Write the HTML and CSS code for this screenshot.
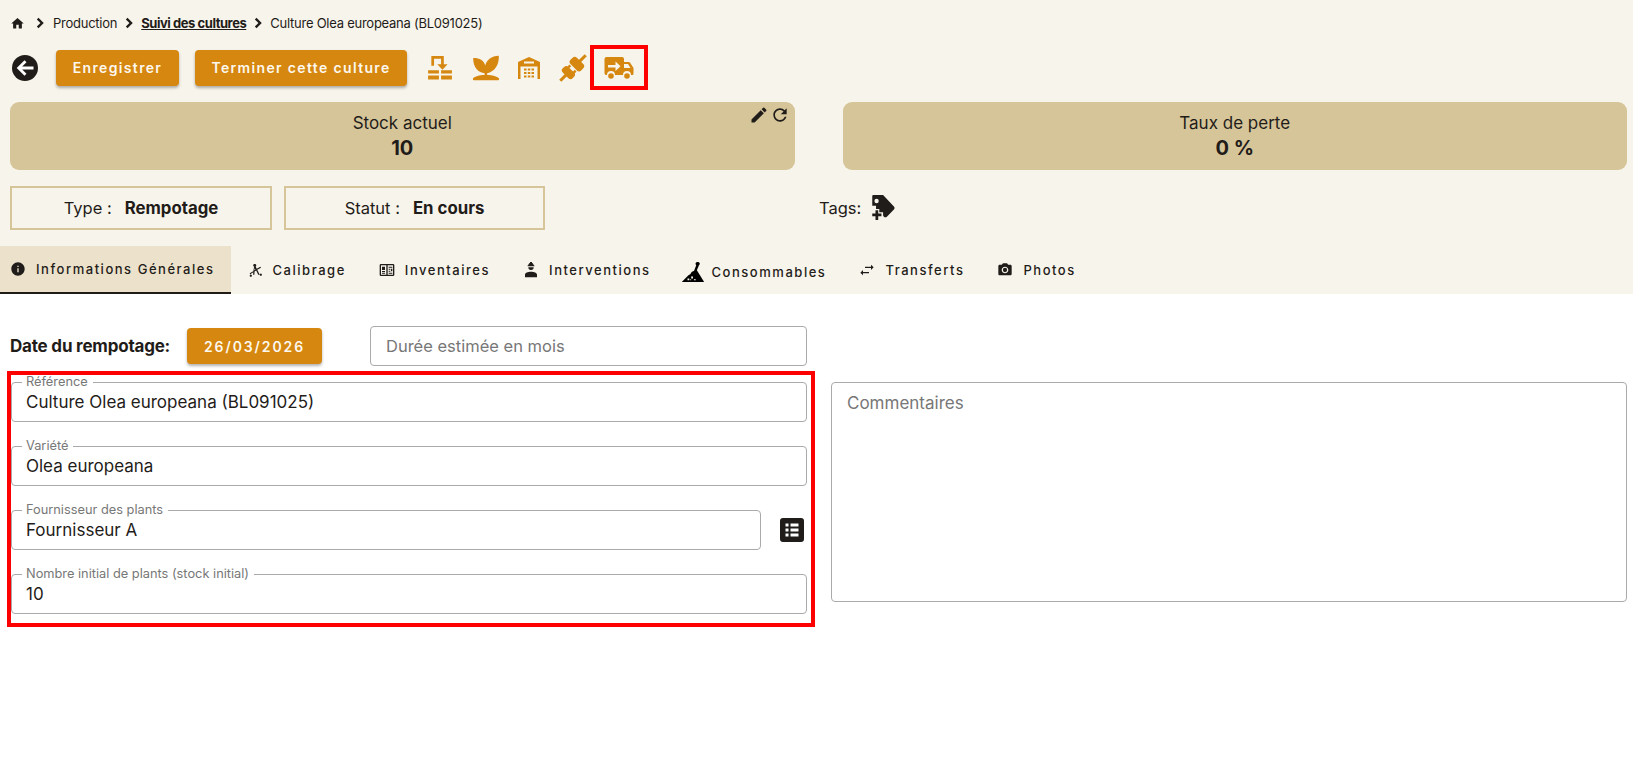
FILE: index.html
```html
<!DOCTYPE html>
<html lang="fr">
<head>
<meta charset="utf-8">
<title>Culture Olea europeana</title>
<link rel="stylesheet" href="styles.css">
</head>
<body>
<header class="top">
  <nav class="crumbs">
    <svg class="home" viewBox="0 0 24 24"><path d="M10 20v-6h4v6h5v-8h3L12 3 2 12h3v8z"/></svg>
    <svg class="chev first" viewBox="0 0 24 24"><path d="M10 5 7.800 7.200 12.600 12l-4.800 4.800L10 19l7-7z"/></svg>
    <span class="crumb">Production</span>
    <svg class="chev second" viewBox="0 0 24 24"><path d="M10 5 7.800 7.200 12.600 12l-4.800 4.800L10 19l7-7z"/></svg>
    <span class="crumb link">Suivi des cultures</span>
    <svg class="chev" viewBox="0 0 24 24"><path d="M10 5 7.800 7.200 12.600 12l-4.800 4.800L10 19l7-7z"/></svg>
    <span class="crumb">Culture Olea europeana (BL091025)</span>
  </nav>
  <div class="actions">
    <svg class="back" viewBox="0 0 26 26"><circle cx="13" cy="13" r="13" fill="#1f1c19"/><path fill="#fff" d="M21.500 11.500H10.200l4.300-4.300L12.500 5.200 4.700 13l7.800 7.800 2-2-4.300-4.300h11.300z"/></svg>
    <button class="btn save">Enregistrer</button>
    <button class="btn end">Terminer cette culture</button>
    <svg class="tool t1" viewBox="0 0 24 24"><path d="M4 1h11.500v7.500H19l-4.700 5-4.800-5H13V3.500H6.500V10H4zM1 14h10v3H1zm12 0h10v3H13zM1 19h10v3.500H1zm12 0h10v3.500H13z"/></svg>
    <svg class="tool t2" viewBox="0 0 24 24"><path d="M10.800 16.500C6 16 1 12.500 1 3.500c5-.2 9 1.800 10.300 6.300C12.800 5 16.500 1.800 23 1.500c.3 8-3.500 13.500-10 15V18c4.500 0 8.500 1.200 10 2.800 .5 .6 .2 1.700-.6 1.700H1.600c-.8 0-1.100-1.100-.6-1.700C2.500 19.200 6.300 18 10.800 18z"/></svg>
    <svg class="tool t3" viewBox="0 0 24 24"><path fill-rule="evenodd" d="M12 1 23 6v17h-2.500V10.500h-17V23H1V6zM7 5.500V7.500h10V5.500zM7 12.500h2.500v2H7zm3.800 0h2.500v2h-2.500zm3.700 0h2.500v2h-2.500zM7 16h2.500v2H7zm3.800 0h2.500v2h-2.500zm3.700 0h2.500v2h-2.500zM7 19.500h2.500v2H7zm3.800 0h2.500v2h-2.500zm3.700 0h2.500v2h-2.500z"/></svg>
    <svg class="tool t4" viewBox="0 0 30 30"><g transform="rotate(-45 15 15)"><rect x="-3" y="13.500" width="8" height="3"/><rect x="4.500" y="8" width="8" height="14" rx="3"/><rect x="12" y="10" width="3" height="2.500"/><rect x="12" y="17.500" width="3" height="2.500"/><rect x="16" y="7.500" width="9" height="15" rx="3"/><rect x="24" y="13.500" width="9" height="3"/></g></svg>
    <span class="flag">
      <svg class="truck" viewBox="0 0 30 24"><path fill-rule="evenodd" d="M2.500 1H18a2 2 0 0 1 2 2v3h4.500c.8 0 1.400.4 1.800 1l3.200 5v5.500c0 1-.7 1.500-1.500 1.500H27a4 4 0 0 0-8 0h-8a4 4 0 0 0-8 0H2.500C1 19 .5 18 .5 17V3a2 2 0 0 1 2-2zM20 8v4h6.500L24 8zM4 9v2.500h7.500V15l5-4.800-5-4.700V9z"/><circle cx="7" cy="20" r="2.800"/><circle cx="23" cy="20" r="2.800"/></svg>
    </span>
  </div>
  <section class="kpis">
    <div class="kpi">
      <span class="kpi-tools">
        <svg viewBox="0 0 24 24"><path d="M3 17.250V21h3.750L17.810 9.940l-3.750-3.750L3 17.250zM20.710 7.040c.39-.39.39-1.020 0-1.410l-2.340-2.340a.9959.9959 0 0 0-1.410 0l-1.830 1.830 3.750 3.750 1.830-1.830z"/></svg>
        <svg viewBox="0 0 24 24"><path d="M17.650 6.350C16.200 4.900 14.210 4 12 4c-4.420 0-7.990 3.580-7.990 8s3.570 8 7.990 8c3.730 0 6.840-2.550 7.730-6h-2.080c-.82 2.330-3.040 4-5.650 4-3.310 0-6-2.690-6-6s2.690-6 6-6c1.660 0 3.140.69 4.220 1.780L13 11h7V4l-2.350 2.350z"/></svg>
      </span>
      <div class="kpi-label">Stock actuel</div>
      <div class="kpi-value">10</div>
    </div>
    <div class="kpi">
      <div class="kpi-label">Taux de perte</div>
      <div class="kpi-value">0 %</div>
    </div>
  </section>
  <section class="meta">
    <div class="box">Type :<b>Rempotage</b></div>
    <div class="box">Statut :<b>En cours</b></div>
    <div class="tags">Tags:
      <svg viewBox="0 0 24 24"><path d="M4 0h9l10 10.500c.8.8.8 2 0 2.800L16.500 20c-.8.8-2 .8-2.800 0L13 19v-3H9.500v-3H6.500V10H3V1a1 1 0 0 1 1-1zm3 3.500a2 2 0 1 0 0 4 2 2 0 0 0 0-4zM6 14h2.500v3H11.500v2.500H8.500v3.500H6v-3.500H3V17h3z"/></svg>
    </div>
  </section>
  <nav class="tabs">
    <div class="tab active">
      <svg viewBox="0 0 24 24"><path d="M12 2C6.480 2 2 6.480 2 12s4.480 10 10 10 10-4.480 10-10S17.520 2 12 2zm1 15h-2v-6h2v6zm0-8h-2V7h2v2z"/></svg>Informations Générales</div>
    <div class="tab">
      <svg viewBox="0 0 24 24"><path d="M12 3a2 2 0 0 1 1 3.700l1.600 3.300 5.400-3 1 1.500-5.600 3.200 3.600 7.300h-2.200l-3-6.200-2.500 1.500-.2 4.700H9.200l.2-3.500L5 18.500 4 17l5.500-3.200 1.200-7A2 2 0 0 1 12 3zm-.5 6.500-.5 3 1.600-.9zM4 20.500a1.700 1.700 0 1 1 0 .01zM19 19a1.700 1.700 0 1 1 0 .01z"/></svg>Calibrage</div>
    <div class="tab">
      <svg viewBox="0 0 24 24"><path fill-rule="evenodd" d="M3 3h18a2 2 0 0 1 2 2v14a2 2 0 0 1-2 2H3a2 2 0 0 1-2-2V5a2 2 0 0 1 2-2zm0 2v14h8V5zm10 0v14h8V5zM4.500 7H9v5H4.500zm0 6.500H9V15H4.500zm0 2.500H9v1.500H4.500zM14.500 7H20v1.500h-5.500zm0 3H17v1.500h-2.500zm3.500 0h2v4h-2zm-3.500 3h2.500v1.500h-2.500zm0 3H20v1.500h-5.500z"/></svg>Inventaires</div>
    <div class="tab">
      <svg viewBox="0 0 24 24"><path d="M10.500 0h3v1.500c1.700.6 2.500 1.800 2.500 3.500h1v1.500H7V5h1c0-1.700.8-2.900 2.500-3.500zM8 8h8a4 4 0 0 1-8 0zM12 14.500c5 0 9 1.800 9 4.500v4H3v-4c0-2.700 4-4.500 9-4.500z"/></svg>Interventions</div>
    <div class="tab cons">
      <svg viewBox="0 0 24 24"><path fill-rule="evenodd" d="M17 1a2 2 0 0 1 1.500 3.600L16.200 10l8 13H-.5L7 15.500l2-1 1.500-2.500 2.700-1.500L15.500 4.500A2 2 0 0 1 17 1zM6 19v2h2v-2zm4-2v2h2v-2zm-1 3v1h1v-1zm4 0v1h2v-1z"/></svg>Consommables</div>
    <div class="tab">
      <svg viewBox="0 0 24 24"><path d="M22 8l-4-4v3H9v2h9v3l4-4zM2 16l4 4v-3h9v-2H6v-3l-4 4z"/></svg>Transferts</div>
    <div class="tab">
      <svg viewBox="0 0 24 24"><circle cx="12" cy="12" r="3.200"/><path d="M9 2 7.170 4H4c-1.100 0-2 .9-2 2v12c0 1.100.9 2 2 2h16c1.100 0 2-.9 2-2V6c0-1.100-.9-2-2-2h-3.170L15 2H9zm3 15c-2.760 0-5-2.240-5-5s2.240-5 5-5 5 2.240 5 5-2.240 5-5 5z"/></svg>Photos</div>
  </nav>
</header>
<main class="content">
  <div class="date-row">
    <span class="date-label">Date du rempotage:</span>
    <button class="btn date">26/03/2026</button>
    <div class="plain">Durée estimée en mois</div>
  </div>
  <div class="columns">
    <div class="fields">
      <fieldset class="field"><legend>Référence</legend>Culture Olea europeana (BL091025)</fieldset>
      <fieldset class="field"><legend>Variété</legend>Olea europeana</fieldset>
      <div class="with-icon">
        <fieldset class="field"><legend>Fournisseur des plants</legend>Fournisseur A</fieldset>
        <svg class="list" viewBox="0 0 24 24"><path fill-rule="evenodd" d="M3 0h18a3 3 0 0 1 3 3v18a3 3 0 0 1-3 3H3a3 3 0 0 1-3-3V3a3 3 0 0 1 3-3zm2.500 5.500v3h3v-3zm5 0v3h8v-3zm-5 5v3h3v-3zm5 0v3h8v-3zm-5 5v3h3v-3zm5 0v3h8v-3z"/></svg>
      </div>
      <fieldset class="field"><legend>Nombre initial de plants (stock initial)</legend>10</fieldset>
    </div>
    <div class="comments">Commentaires</div>
  </div>
</main>
</body>
</html>
```
FILE: styles.css
```css
* { box-sizing: border-box; }
html, body { margin: 0; padding: 0; }
body {
  width: 1633px;
  height: 768px;
  overflow: hidden;
  background: #fff;
  color: #1f1c19;
  font-family: "Inter", "Liberation Sans", sans-serif;
}
.top { background: #f7f4eb; height: 294px; }

.crumbs { display: flex; align-items: center; height: 20px; padding: 13px 0 0 10px; box-sizing: content-box; font-size: 13px; letter-spacing: -0.25px; }
.home { width: 15px; height: 15px; fill: #1f1c19; }
.chev { width: 18px; height: 18px; fill: #1f1c19; margin: 0 3px; }
.chev.first { margin: 0 4px 0 6px; }
.chev.second { margin: 0 3px; }
.crumb.link { font-weight: 700; letter-spacing: -0.45px; text-decoration: underline; }

.actions { display: flex; align-items: center; height: 45px; margin-top: 12px; padding-left: 12px; }
.back { width: 26px; height: 26px; margin-right: 18px; }
.btn {
  border: 0;
  border-radius: 4px;
  background: #d68710;
  color: #fdf8ee;
  font-family: "Inter", "Liberation Sans", sans-serif;
  font-size: 14px;
  font-weight: 600;
  letter-spacing: 1.350px;
  height: 36px;
  padding: 0;
  box-shadow: 0 2px 3px rgba(0, 0, 0, .3);
}
.save { width: 123px; margin-right: 16px; }
.end { width: 212px; margin-right: 20px; }
.tool { fill: #d68710; width: 26px; height: 26px; margin-right: 19px; }
.tool.t2 { width: 28px; height: 28px; margin-right: 17px; }
.tool.t3 { width: 24px; height: 24px; }
.tool.t4 { width: 30px; height: 30px; margin-right: 0; margin-left: -2px; }
.flag { display: flex; align-items: center; justify-content: center; width: 58px; height: 45px; margin-left: 2px; border: 4px solid #f00; }
.truck { width: 30px; height: 24px; fill: #d68710; }

.kpis { display: flex; gap: 48px; margin-top: 12px; padding: 0 6px 0 10px; }
.kpi { position: relative; flex: 1; height: 68px; background: #d6c599; border-radius: 9px; text-align: center; padding-top: 10px; }
.kpi-label { font-size: 17px; line-height: 22px; }
.kpi-value { font-size: 20px; font-weight: 700; line-height: 28px; }
.kpi-tools { position: absolute; top: 3px; right: 5px; display: flex; gap: 1px; }
.kpi-tools svg { width: 20px; height: 20px; fill: #1f1c19; }

.meta { display: flex; align-items: center; margin-top: 16px; padding-left: 10px; }
.box { display: flex; align-items: center; justify-content: center; width: 262px; height: 44px; margin-right: 12px; border: 2px solid #d6c599; font-size: 16.500px; }
.box + .box { width: 261px; }
.box b { margin-left: 13px; font-size: 16.800px; font-weight: 700; }
.tags { display: flex; align-items: center; margin-left: 262px; font-size: 16.500px; }
.tags svg { width: 26px; height: 26px; margin-left: 8px; fill: #1f1c19; }

.tabs { display: flex; margin-top: 16px; height: 48px; }
.tab { display: flex; align-items: center; padding: 0 17px 0 16px; font-size: 13px; font-weight: 500; letter-spacing: 1.530px; white-space: nowrap; }
.tab svg { width: 16px; height: 16px; margin-right: 10px; fill: #1f1c19; }
.tab.active { padding-left: 10px; padding-right: 16px; background: #ece2cb; border-bottom: 2px solid #1f1c19; }
.tab.cons { padding: 3px 17px 0 14px; }
.tab.cons svg { width: 22px; height: 22px; margin-right: 8px; fill: #000; }

.content { padding: 32px 6px 0 10px; }
.date-row { display: flex; align-items: center; height: 40px; }
.date-label { width: 177px; font-size: 17px; font-weight: 700; letter-spacing: -0.2px; }
.btn.date { width: 135px; height: 36px; margin-right: 48px; font-size: 14px; letter-spacing: 1.900px; }
.plain { width: 437px; height: 40px; display: flex; align-items: center; padding-left: 15px; border: 1px solid #aaa; border-radius: 4px; color: #777; font-size: 16.500px; }

.columns { display: flex; }
.fields { width: 808px; height: 256px; margin: 5px 0 0 -3px; padding: 1px 4px 0 0; border: 4px solid #f00; display: flex; flex-direction: column; gap: 18px; }
.field { margin: 0; width: 100%; height: 46px; min-width: 0; padding: 3px 0 0 14px; border: 1px solid #aaa; border-radius: 4px; font-size: 17px; line-height: 22px; }
.field legend { margin-left: -4px; padding: 0 5px 0 4px; font-size: 12.800px; line-height: 12px; color: #777; }
.with-icon { display: flex; align-items: center; height: 46px; }
.with-icon .field { flex: 1; }
.list { flex: none; width: 24px; height: 24px; margin: 6px 3px 0 19px; fill: #1f1c19; }
.comments { width: 796px; height: 220px; margin: 16px 0 0 16px; padding: 10px 15px; border: 1px solid #aaa; border-radius: 4px; color: #777; font-size: 17px; }
```
